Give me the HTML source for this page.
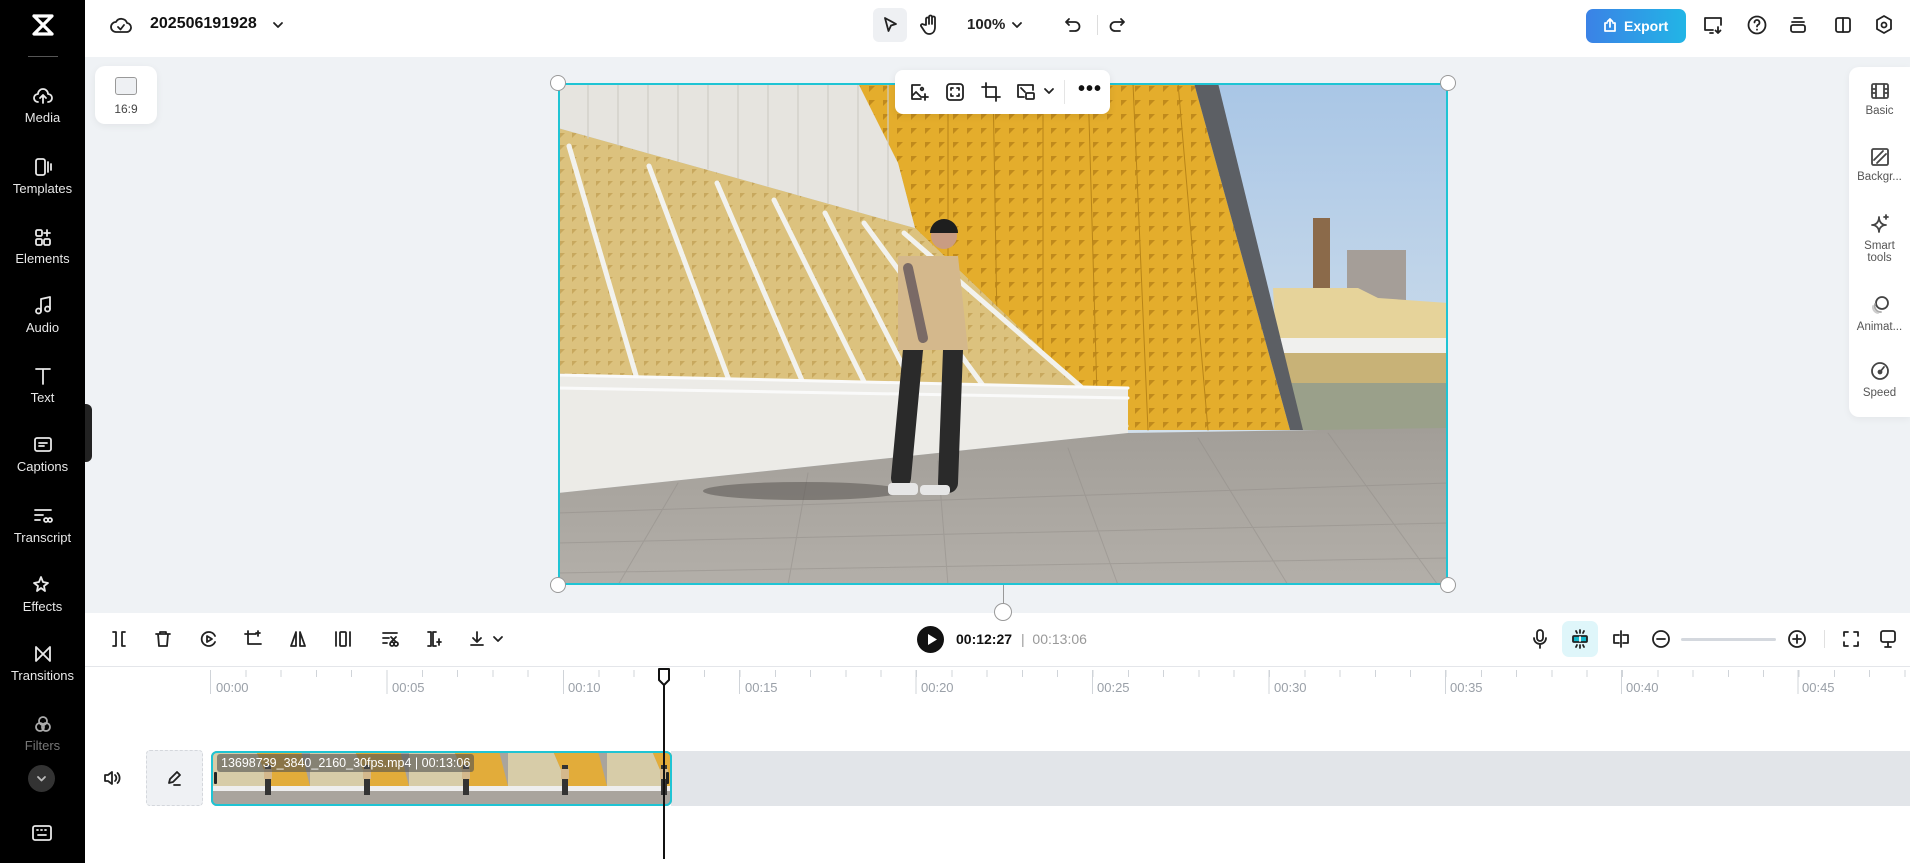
<!DOCTYPE html>
<html><head><meta charset="utf-8"><style>
*{margin:0;padding:0;box-sizing:border-box}
body{width:1910px;height:863px;overflow:hidden;background:#fff;font-family:"Liberation Sans",sans-serif;position:relative;color:#111}
.a{position:absolute}
.sb{left:0;top:0;width:85px;height:863px;background:#000}
.si{position:absolute;left:0;width:85px;text-align:center;color:#e8e8e8;font-size:13px}
.si svg{display:block;margin:0 auto 4px}
.ic{position:absolute;transform:translate(-50%,-50%)}
svg{fill:none;stroke:#222;stroke-width:1.8;stroke-linecap:round;stroke-linejoin:round}
.sb svg{stroke:#e8e8e8}
.rl{position:absolute;top:680px;font-size:13px;color:#9aa0a8}
.rp{font-size:11.5px;color:#555;text-align:center;position:absolute;width:61px;left:0}
.rp svg{display:block;margin:0 auto 5px;stroke:#444}
</style></head><body>
<div class="a" style="left:85px;top:0;width:1825px;height:57px;background:#fff"></div>
<div class="a" style="left:85px;top:57px;width:1825px;height:556px;background:#eff2f5"></div>

<div class="a sb">
 <svg class="a" style="left:30px;top:12px" width="26" height="26" viewBox="0 0 26 26"><path d="M4 4h18L4 22h18M4 4l18 18" stroke="#fff" stroke-width="3.2"/></svg>
 <div class="a" style="left:28px;top:56px;width:30px;height:1px;background:#555"></div>
 <div class="si" style="top:86px"><svg width="22" height="20" viewBox="0 0 22 20"><path d="M6 16a4 4 0 0 1 0-8 5 5 0 0 1 10 0 4 4 0 0 1 0 8M11 17V9M8 12l3-3 3 3"/></svg>Media</div>
 <div class="si" style="top:157px"><svg width="22" height="20" viewBox="0 0 22 20"><rect x="4" y="2" width="9" height="16" rx="2"/><path d="M16 5v10M19 7v6"/></svg>Templates</div>
 <div class="si" style="top:227px"><svg width="22" height="20" viewBox="0 0 22 20"><rect x="4" y="3" width="6" height="6" rx="1.5"/><path d="M15 3v6M12 6h6"/><rect x="4" y="12" width="6" height="6" rx="1.5"/><rect x="12" y="12" width="6" height="6" rx="1.5"/></svg>Elements</div>
 <div class="si" style="top:296px"><svg width="22" height="20" viewBox="0 0 22 20"><path d="M9 15V3l9-2v12"/><circle cx="6.5" cy="15" r="2.5"/><circle cx="15.5" cy="13" r="2.5"/></svg>Audio</div>
 <div class="si" style="top:366px"><svg width="22" height="20" viewBox="0 0 22 20"><path d="M4 3h14M11 3v15"/></svg>Text</div>
 <div class="si" style="top:435px"><svg width="22" height="20" viewBox="0 0 22 20"><rect x="3" y="3" width="16" height="13" rx="2"/><path d="M7 8h8M7 11h5"/></svg>Captions</div>
 <div class="si" style="top:506px"><svg width="22" height="20" viewBox="0 0 22 20"><path d="M3 4h16M3 9h8M3 14h5"/><circle cx="14" cy="14" r="2"/><circle cx="18" cy="14" r="2"/></svg>Transcript</div>
 <div class="si" style="top:575px"><svg width="22" height="20" viewBox="0 0 22 20"><path d="M9 2l2 5 5 1-4 3 1 5-4-3-4 3 1-5-4-3 5-1z"/></svg>Effects</div>
 <div class="si" style="top:644px"><svg width="22" height="20" viewBox="0 0 22 20"><path d="M4 3v14l7-7-7-7M18 3v14l-7-7 7-7"/></svg>Transitions</div>
 <div class="si" style="top:714px;color:#777"><svg width="22" height="20" viewBox="0 0 22 20" style="stroke:#aaa"><circle cx="11" cy="7" r="4"/><circle cx="8" cy="13" r="4"/><circle cx="14" cy="13" r="4"/></svg>Filters</div>
 <div class="a" style="left:28px;top:765px;width:27px;height:27px;border-radius:50%;background:#333"></div>
 <svg class="a" style="left:35px;top:772px" width="13" height="13" viewBox="0 0 13 13"><path d="M3 5l3.5 3.5L10 5" stroke="#bbb"/></svg>
 <svg class="a" style="left:31px;top:824px" width="22" height="18" viewBox="0 0 22 18"><rect x="2" y="2" width="18" height="14" rx="2"/><path d="M6 6h1M10 6h1M14 6h1M7 11h8"/></svg>
</div>
<div class="a" style="left:85px;top:404px;width:7px;height:58px;background:#222;border-radius:0 6px 6px 0"></div>

<svg class="a" style="left:109px;top:14px" width="24" height="22" viewBox="0 0 24 22"><path d="M7 18a5 5 0 0 1 0-10 6 6 0 0 1 11 1 4.5 4.5 0 0 1-1 9z"/><path d="M9 13l2.5 2.5L15 11"/></svg>
<div class="a" style="left:150px;top:15px;font-size:16px;font-weight:bold">202506191928</div>
<svg class="a" style="left:271px;top:19px" width="14" height="12" viewBox="0 0 14 12"><path d="M3 4l4 4 4-4"/></svg>

<div class="a" style="left:873px;top:8px;width:34px;height:34px;background:#eef0f3;border-radius:6px"></div>
<svg class="a" style="left:880px;top:15px" width="20" height="20" viewBox="0 0 20 20"><path d="M5 3l11 6-5 1.5L8.5 16z"/></svg>
<svg class="a" style="left:920px;top:14px" width="20" height="22" viewBox="0 0 20 22"><path d="M6 11V5a1.5 1.5 0 0 1 3 0v5V3a1.5 1.5 0 0 1 3 0v7V4a1.5 1.5 0 0 1 3 0v9c0 4-2 7-6 7-3 0-4-2-6-5l-2-3a1.5 1.5 0 0 1 2.5-1.5z"/></svg>
<div class="a" style="left:967px;top:16px;font-size:15px;font-weight:bold;color:#222">100%</div>
<svg class="a" style="left:1010px;top:19px" width="14" height="12" viewBox="0 0 14 12"><path d="M3 4l4 4 4-4"/></svg>
<svg class="a" style="left:1063px;top:15px" width="20" height="20" viewBox="0 0 20 20"><path d="M6 4L3 7l3 3M3 7h9a4.5 4.5 0 0 1 0 9H7"/></svg>
<div class="a" style="left:1097px;top:15px;width:1px;height:20px;background:#ddd"></div>
<svg class="a" style="left:1107px;top:15px" width="20" height="20" viewBox="0 0 20 20" style="stroke:#ccc"><path d="M14 4l3 3-3 3M17 7H8a4.5 4.5 0 0 0 0 9h5"/></svg>

<div class="a" style="left:1586px;top:9px;width:100px;height:34px;border-radius:7px;background:linear-gradient(90deg,#3b82e6,#22b5e6);color:#fff;font-weight:bold;font-size:14px;line-height:34px;padding-left:38px">Export</div>
<svg class="a" style="left:1602px;top:17px" width="16" height="16" viewBox="0 0 16 16"><path d="M5 6h-2v8h10V6h-2M8 10V2M5.5 4.5L8 2l2.5 2.5" stroke="#fff"/></svg>
<svg class="a" style="left:1702px;top:14px" width="22" height="22" viewBox="0 0 22 22"><path d="M11 16H3V4h16v7"/><path d="M16 13v6M13.5 16.5L16 19l2.5-2.5M8 19h3"/></svg>
<svg class="a" style="left:1746px;top:14px" width="22" height="22" viewBox="0 0 22 22"><circle cx="11" cy="11" r="8.5"/><path d="M8.5 8.5a2.5 2.5 0 1 1 3.5 2.3c-.7.4-1 .9-1 1.7M11 15.5v.3"/></svg>
<svg class="a" style="left:1787px;top:14px" width="22" height="22" viewBox="0 0 22 22"><path d="M7 4h8M5 8h12"/><rect x="4" y="11" width="14" height="7" rx="2"/></svg>
<svg class="a" style="left:1832px;top:14px" width="22" height="22" viewBox="0 0 22 22"><rect x="4" y="4" width="14" height="14" rx="2"/><path d="M11 4v14"/></svg>
<svg class="a" style="left:1873px;top:13px" width="22" height="24" viewBox="0 0 22 24"><path d="M11 3l7 4v9l-7 4-7-4V7z"/><circle cx="11" cy="12" r="2.5"/></svg>

<div class="a" style="left:95px;top:66px;width:62px;height:58px;background:#fff;border-radius:10px;box-shadow:0 2px 8px rgba(0,0,0,.06)"></div>
<div class="a" style="left:115px;top:77px;width:22px;height:18px;border:1.5px solid #999;border-radius:3px;background:#eef0f3"></div>
<div class="a" style="left:95px;top:102px;width:62px;text-align:center;font-size:12px;color:#444">16:9</div>

<!-- video -->
<div class="a" style="left:558px;top:83px;width:890px;height:502px;overflow:hidden;background:#c6d9ea">
<svg width="890" height="502" viewBox="0 0 890 502" style="stroke:none">
 <defs>
  <linearGradient id="sky" x1="0" y1="0" x2="0" y2="1"><stop offset="0" stop-color="#a9c6e6"/><stop offset="1" stop-color="#e4ebee"/></linearGradient>
  <linearGradient id="gr" x1="0" y1="0" x2="0" y2="1"><stop offset="0" stop-color="#a29e98"/><stop offset="1" stop-color="#b3afa9"/></linearGradient>
  <pattern id="yp" width="14" height="14" patternUnits="userSpaceOnUse"><rect width="14" height="14" fill="#e4ad2c"/><path d="M3 3h6l-6 6z" fill="#c08a1c"/></pattern>
  <pattern id="gp" width="12" height="12" patternUnits="userSpaceOnUse"><rect width="12" height="12" fill="#dcc27e"/><path d="M2 2h5l-5 5z" fill="#c8a85e"/></pattern>
 </defs>
 <rect width="890" height="502" fill="url(#sky)"/>
 <rect x="755" y="135" width="17" height="75" fill="#8b6a4a"/>
 <rect x="789" y="167" width="59" height="50" fill="#a59e98"/>
 <polygon points="715,205 800,205 820,215 890,220 890,300 720,300" fill="#e6d39a"/>
 <rect x="720" y="255" width="170" height="15" fill="#f0f0ee"/>
 <rect x="720" y="270" width="170" height="30" fill="#c8b277"/>
 <polygon points="720,300 890,300 890,347 735,347" fill="#9aa08a"/>
 <polygon points="298,0 636,0 732,347 568,347 357,145 340,80" fill="url(#yp)"/>
 <g stroke="#b88418" stroke-width="1"><path d="M390 0L390 230M435 0L440 300M485 0L485 300M530 0L540 347M575 0L590 347M620 0L650 347"/></g>
 <polygon points="636,0 660,0 745,347 732,347" fill="#5c5f64"/>
 <polygon points="0,45 357,145 568,347 0,347" fill="url(#gp)"/>
 <polygon points="0,0 300,0 340,80 357,145 0,45" fill="#e6e4df"/>
 <g stroke="#cfccc5" stroke-width="1.2"><path d="M30 0v55M60 0v62M90 0v70M120 0v78M150 0v86M180 0v95M210 0v103M240 0v112M270 0v120M300 0v128M330 0v137"/></g>
 <g stroke="#f2f2ee" stroke-width="5">
  <path d="M11 63L91 337M91 83L187 340M159 100L261 337M216 117L323 333M267 130L369 330M306 140L443 327M346 150L568 343"/>
 </g>
 <polygon points="0,292 570,305 570,350 0,410" fill="#ecebe7"/>
 <path d="M0 292L570 305M0 305L570 315" stroke="#fafafa" stroke-width="3"/>
 <polygon points="0,410 570,350 890,345 890,502 0,502" fill="url(#gr)"/>
 <g stroke="#8f8a84" stroke-width="1" opacity=".45"><path d="M0 430L890 400M0 460L890 440M0 490L890 475M120 400L60 502M250 390L230 502M380 378L390 502M510 365L560 502M640 355L730 502M770 350L880 502"/></g>
 <ellipse cx="245" cy="408" rx="100" ry="9" fill="#5a5652" opacity=".55"/>
 <path d="M355 267L343 395M395 267L390 400" stroke="#2a2a2a" stroke-width="20" stroke-linecap="round"/>
 <path d="M340 173h60l10 94h-70z" fill="#d4b88c"/>
 <path d="M350 185l15 70" stroke="#7a6a66" stroke-width="10"/>
 <circle cx="386" cy="153" r="13" fill="#c99c82"/>
 <path d="M372 150a14 14 0 0 1 28 0z" fill="#1e1e1e"/>
 <rect x="330" y="400" width="30" height="12" rx="4" fill="#e6e6e6"/>
 <rect x="362" y="402" width="30" height="10" rx="4" fill="#e6e6e6"/>
</svg>
</div>
<div class="a" style="left:558px;top:83px;width:890px;height:502px;border:2px solid #1fc4d4"></div>
<div class="a" style="left:550px;top:75px;width:16px;height:16px;border-radius:50%;background:#fff;border:1.5px solid #999"></div>
<div class="a" style="left:1440px;top:75px;width:16px;height:16px;border-radius:50%;background:#fff;border:1.5px solid #999"></div>
<div class="a" style="left:550px;top:577px;width:16px;height:16px;border-radius:50%;background:#fff;border:1.5px solid #999"></div>
<div class="a" style="left:1440px;top:577px;width:16px;height:16px;border-radius:50%;background:#fff;border:1.5px solid #999"></div>
<div class="a" style="left:1003px;top:585px;width:1px;height:20px;background:#999"></div>
<div class="a" style="left:994px;top:603px;width:18px;height:18px;border-radius:50%;background:#fff;border:1.5px solid #999"></div>

<div class="a" style="left:895px;top:70px;width:215px;height:44px;background:#fff;border-radius:8px;box-shadow:0 2px 8px rgba(0,0,0,.08)"></div>
<svg class="a" style="left:908px;top:81px" width="22" height="22" viewBox="0 0 22 22"><path d="M12 4H4v14h9M4 15l4-4 5 5"/><circle cx="14" cy="8" r="1.3"/><path d="M17 13v6M14 16h6"/></svg>
<svg class="a" style="left:944px;top:81px" width="22" height="22" viewBox="0 0 22 22"><rect x="3" y="3" width="16" height="16" rx="3"/><path d="M7 9V7h2M13 7h2v2M15 13v2h-2M9 15H7v-2"/></svg>
<svg class="a" style="left:980px;top:81px" width="22" height="22" viewBox="0 0 22 22"><path d="M6 2v14h14M2 6h14v14"/></svg>
<svg class="a" style="left:1015px;top:81px" width="22" height="22" viewBox="0 0 22 22"><path d="M18 9V4H3v12h6"/><rect x="11" y="12" width="8" height="6" rx="1"/><path d="M6 7l4 4"/></svg>
<svg class="a" style="left:1043px;top:86px" width="12" height="10" viewBox="0 0 12 10" style="stroke:#bbb"><path d="M2 3l4 4 4-4"/></svg>
<div class="a" style="left:1064px;top:80px;width:1px;height:24px;background:#e5e5e5"></div>
<div class="a" style="left:1078px;top:78px;font-size:20px;font-weight:bold;letter-spacing:1px">•••</div>

<div class="a" style="left:1849px;top:67px;width:61px;height:350px;background:#fff;border-radius:10px 0 0 10px;box-shadow:0 2px 8px rgba(0,0,0,.05)">
 <div class="rp" style="top:15px"><svg width="20" height="18" viewBox="0 0 20 18"><rect x="2" y="2" width="16" height="14" rx="1.5"/><path d="M6 2v14M14 2v14M2 7h4M2 11h4M14 7h4M14 11h4"/></svg>Basic</div>
 <div class="rp" style="top:81px"><svg width="20" height="18" viewBox="0 0 20 18"><rect x="2" y="1" width="16" height="16" rx="1.5"/><path d="M4 12l9-9M7 15l9-9"/></svg>Backgr...</div>
 <div class="rp" style="top:146px"><svg width="22" height="22" viewBox="0 0 22 22"><path d="M10 4c0 5-3 8-7 8 4 0 7 3 7 7 0-4 3-7 7-7-4 0-7-3-7-8zM17 2v4M15 4h4"/></svg>Smart<br>tools</div>
 <div class="rp" style="top:227px"><svg width="22" height="22" viewBox="0 0 22 22"><circle cx="13" cy="9" r="6"/><path d="M6 10a6 6 0 0 0 6 8" stroke="#aaa"/><path d="M4 12a6 6 0 0 0 5 7" stroke="#ccc"/></svg>Animat...</div>
 <div class="rp" style="top:293px"><svg width="22" height="22" viewBox="0 0 22 22"><circle cx="11" cy="11" r="8"/><path d="M11 12l4-5"/><circle cx="11" cy="12" r="1.5"/></svg>Speed</div>
</div>

<div class="a" style="left:85px;top:666px;width:1825px;height:1px;background:#e4e6ea"></div>
<svg class="ic" style="left:119px;top:639px" width="20" height="20" viewBox="0 0 20 20"><path d="M4 3h3v14H4M16 3h-3v14h3"/></svg>
<svg class="ic" style="left:163px;top:639px" width="20" height="20" viewBox="0 0 20 20"><path d="M3 5h14M7 5V3h6v2M5 5l1 12h8l1-12"/></svg>
<svg class="ic" style="left:209px;top:639px" width="20" height="20" viewBox="0 0 20 20"><path d="M16 7a7 7 0 1 0 0 6"/><path d="M8 7l5 3-5 3z"/></svg>
<svg class="ic" style="left:253px;top:639px" width="20" height="20" viewBox="0 0 20 20"><path d="M5 2v13h13M2 5h11M15 2v5M13 4h4"/></svg>
<svg class="ic" style="left:298px;top:639px" width="20" height="20" viewBox="0 0 20 20"><path d="M8 3L3 17h5zM12 3l5 14h-5z"/></svg>
<svg class="ic" style="left:343px;top:639px" width="20" height="20" viewBox="0 0 20 20"><rect x="7" y="3" width="6" height="14" rx="1"/><path d="M3 3v14M17 3v14"/></svg>
<svg class="ic" style="left:390px;top:639px" width="20" height="20" viewBox="0 0 20 20"><path d="M3 4h14M3 9h6M3 14h4"/><circle cx="12" cy="15" r="2"/><circle cx="16" cy="15" r="2"/><path d="M11 8l5 5M16 8l-5 5"/></svg>
<svg class="ic" style="left:434px;top:639px" width="20" height="20" viewBox="0 0 20 20"><path d="M4 3h3v14H4M12 3h-3v14h3M15 10v6M13 13h4"/></svg>
<svg class="ic" style="left:477px;top:639px" width="20" height="20" viewBox="0 0 20 20"><path d="M10 3v10M6 9l4 4 4-4M4 16h12"/></svg>
<svg class="ic" style="left:498px;top:639px" width="12" height="10" viewBox="0 0 12 10" style="stroke:#777"><path d="M2 3l4 4 4-4"/></svg>

<div class="a" style="left:917px;top:626px;width:27px;height:27px;border-radius:50%;background:#111"></div>
<svg class="a" style="left:926px;top:633px" width="12" height="13" viewBox="0 0 12 13"><path d="M2 1l9 5.5L2 12z" fill="#fff" stroke="none"/></svg>
<div class="a" style="left:956px;top:631px;font-size:14px;font-weight:bold">00:12:27</div>
<div class="a" style="left:1021px;top:631px;font-size:14px;color:#999">|&nbsp; 00:13:06</div>

<svg class="ic" style="left:1540px;top:639px" width="20" height="22" viewBox="0 0 20 22"><rect x="7" y="2" width="6" height="11" rx="3"/><path d="M4 10a6 6 0 0 0 12 0M10 16v4"/></svg>
<div class="a" style="left:1562px;top:621px;width:36px;height:36px;border-radius:7px;background:#dff6fa"></div>
<svg class="ic" style="left:1580px;top:639px" width="22" height="22" viewBox="0 0 22 22" style="stroke:#14b8cc"><rect x="4" y="8" width="14" height="6" rx="1" fill="#14b8cc"/><path d="M11 2v3M11 17v3M7 3l1 2M15 3l-1 2M7 19l1-2M15 19l-1-2"/><path d="M11 9v4" stroke="#fff"/></svg>
<svg class="ic" style="left:1621px;top:639px" width="20" height="20" viewBox="0 0 20 20"><path d="M10 2v16M8 6H3v8h5M12 6h5v8h-5"/></svg>
<svg class="ic" style="left:1661px;top:639px" width="20" height="20" viewBox="0 0 20 20"><circle cx="10" cy="10" r="8"/><path d="M6 10h8"/></svg>
<div class="a" style="left:1681px;top:638px;width:95px;height:3px;background:#d4d8de;border-radius:2px"></div>
<svg class="ic" style="left:1797px;top:639px" width="20" height="20" viewBox="0 0 20 20"><circle cx="10" cy="10" r="8"/><path d="M6 10h8M10 6v8"/></svg>
<div class="a" style="left:1824px;top:630px;width:1px;height:18px;background:#e0e0e0"></div>
<svg class="ic" style="left:1851px;top:639px" width="20" height="20" viewBox="0 0 20 20"><path d="M3 7V3h4M13 3h4v4M17 13v4h-4M7 17H3v-4"/></svg>
<svg class="ic" style="left:1888px;top:639px" width="20" height="20" viewBox="0 0 20 20"><rect x="3" y="2" width="14" height="11" rx="2"/><path d="M10 13v5M7 18h6"/></svg>

<div class="a" style="left:210px;top:670px;width:1700px;height:7px;background:repeating-linear-gradient(90deg,#d0d4d9 0 1px,transparent 1px 35.3px)"></div>
<div class="a" style="left:210px;top:670px;width:1700px;height:24px;background:repeating-linear-gradient(90deg,#d0d4d9 0 1px,transparent 1px 176.4px)"></div>
<div class="rl" style="left:216px">00:00</div><div class="rl" style="left:392px">00:05</div><div class="rl" style="left:568px">00:10</div><div class="rl" style="left:745px">00:15</div><div class="rl" style="left:921px">00:20</div><div class="rl" style="left:1097px">00:25</div><div class="rl" style="left:1274px">00:30</div><div class="rl" style="left:1450px">00:35</div><div class="rl" style="left:1626px">00:40</div><div class="rl" style="left:1802px">00:45</div>

<svg class="a" style="left:102px;top:769px" width="20" height="18" viewBox="0 0 20 18"><path d="M3 6h3l4-3v12l-4-3H3zM13 6a4 4 0 0 1 0 6M15.5 4a7 7 0 0 1 0 10"/></svg>
<div class="a" style="left:146px;top:750px;width:57px;height:56px;background:#eff1f4;border:1px dashed #d4d7dc;border-radius:4px"></div>
<svg class="a" style="left:165px;top:769px" width="18" height="18" viewBox="0 0 18 18"><path d="M4 14l1-4 7-7 3 3-7 7zM9 16h6"/></svg>
<div class="a" style="left:671px;top:751px;width:1239px;height:55px;background:#e2e5e9"></div>
<div class="a" style="left:211px;top:751px;width:461px;height:55px;border-radius:6px;overflow:hidden;background:#b8b2a8">
 <svg width="461" height="55" viewBox="0 0 461 55" style="stroke:none">
  <g id="t"><rect width="99" height="55" fill="#a9a49d"/><polygon points="0,0 45,0 60,35 0,35" fill="#d7cca8"/><polygon points="45,0 90,0 99,35 60,35" fill="#e2ac3a"/><rect x="0" y="35" width="99" height="5" fill="#eee"/><rect x="54" y="14" width="6" height="30" fill="#333"/><rect x="53" y="18" width="8" height="10" fill="#d4b88c"/></g>
  <use href="#t" x="99"/><use href="#t" x="198"/><use href="#t" x="297"/><use href="#t" x="396"/>
 </svg>
 <div class="a" style="left:6px;top:3px;height:18px;background:rgba(80,80,80,.6);color:#fff;font-size:12.5px;line-height:18px;padding:0 4px;border-radius:3px">13698739_3840_2160_30fps.mp4 | 00:13:06</div>
</div>
<div class="a" style="left:211px;top:751px;width:461px;height:55px;border:2.5px solid #1fc4d4;border-radius:6px"></div>
<div class="a" style="left:214px;top:772px;width:3px;height:12px;background:#222;border-radius:1px"></div>
<div class="a" style="left:666px;top:772px;width:3px;height:12px;background:#222;border-radius:1px"></div>

<div class="a" style="left:663px;top:680px;width:2px;height:179px;background:#111"></div>
<svg class="a" style="left:657px;top:667px" width="14" height="20" viewBox="0 0 14 20"><path d="M2 2h10v11l-5 5-5-5z" fill="#fff" stroke="#111" stroke-width="2"/></svg>
</body></html>
